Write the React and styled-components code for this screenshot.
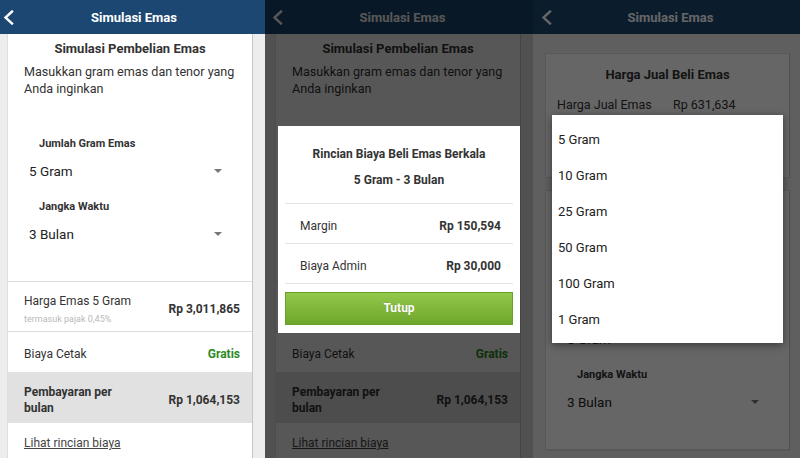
import React from "react";
import styled, { createGlobalStyle } from "styled-components";

const Global = createGlobalStyle`
  html, body { margin: 0; padding: 0; background: #ececec; }
  body { font-family: Roboto, "Noto Sans", Arial, sans-serif; -webkit-font-smoothing: antialiased; }
  #root { width: 800px; height: 458px; overflow: hidden; }
  * { box-sizing: border-box; }
`;

const Screen = styled.div`
  display: flex;
  width: 800px;
  height: 458px;
  overflow: hidden;
`;

const Phone = styled.div`
  position: relative;
  flex: none;
  width: ${(p) => p.$w}px;
  height: 458px;
  overflow: hidden;
  display: flex;
  flex-direction: column;
  background: #ededed;
`;

const Header = styled.div`
  flex: none;
  height: 34px;
  background: #1c4772;
  display: grid;
  grid-template-columns: 40px 1fr 40px;
  align-items: center;
  padding-left: ${(p) => p.$pad}px;
`;

const HeaderTitle = styled.div`
  color: #fff;
  font-size: 13px;
  font-weight: 700;
  text-align: center;
  grid-column: 2;
`;

const BackIcon = () => (
  <svg width="11" height="15" viewBox="0 0 11 15">
    <polyline points="9,1.5 2.5,7.5 9,13.5" fill="none" stroke="#fff" strokeWidth="2.4" strokeLinecap="square" />
  </svg>
);

const Body = styled.div`
  flex: 1;
  display: flex;
  flex-direction: column;
  gap: 12px;
  padding: 0 ${(p) => p.$r}px 0 ${(p) => p.$l}px;
  overflow: hidden;
`;

const Card = styled.div`
  flex: none;
  background: #fff;
  border: 1px solid #dedede;
  border-right-color: #c6c6c6;
  margin-top: ${(p) => p.$mt || 0}px;
  height: ${(p) => (p.$h ? `${p.$h}px` : "auto")};
`;

const Form = styled.div`
  padding: ${(p) => (p.$compact ? 114 : 17)}px 0 33px;
  border-bottom: 1px solid #dcdcdc;
`;

const CardTitle = styled.div`
  font-size: 13px;
  font-weight: 700;
  line-height: 18px;
  color: #333;
  text-align: center;
`;

const Desc = styled.div`
  margin: 5px 8px 0 16px;
  font-size: 12.6px;
  line-height: 17px;
  color: #333;
`;

const Label = styled.div`
  margin: ${(p) => p.$mt}px 0 0 31px;
  font-size: 11px;
  font-weight: 700;
  line-height: 14px;
  color: #333;
`;

const Select = styled.div`
  margin-top: 5px;
  height: 29px;
  display: flex;
  align-items: center;
  justify-content: space-between;
  padding: 0 30px 0 21px;
  font-size: 13.5px;
  color: #222;
`;

const Caret = styled.span`
  width: 0;
  height: 0;
  border-left: 4px solid transparent;
  border-right: 4px solid transparent;
  border-top: 4px solid #777;
`;

const Row = styled.div`
  display: flex;
  align-items: center;
  justify-content: space-between;
  height: ${(p) => p.$h}px;
  padding: ${(p) => p.$pt || 0}px 12px 0 16px;
  background: ${(p) => (p.$shade ? "#e1e1e1" : "#fff")};
  border-bottom: ${(p) => (p.$line ? "1px solid #dcdcdc" : "none")};
  font-size: 12px;
  color: #333;
`;

const LeftCol = styled.div`
  display: flex;
  flex-direction: column;
  max-width: ${(p) => (p.$narrow ? "104px" : "none")};
  font-weight: ${(p) => (p.$bold ? 700 : 400)};
  line-height: 16px;
`;

const Sub = styled.span`
  margin-top: 4px;
  font-size: 9px;
  line-height: 12px;
  color: #b9b9b9;
`;

const Value = styled.span`
  font-weight: 700;
  color: ${(p) => (p.$green ? "#2a8a1f" : "#333")};
`;

const LinkText = styled.span`
  text-decoration: underline;
  color: #444;
  font-size: 12px;
`;

const SimCard = ({ mt, compact }) => (
  <Card $mt={mt}>
    <Form $compact={compact}>
      {!compact && (
        <>
          <CardTitle>Simulasi Pembelian Emas</CardTitle>
          <Desc>Masukkan gram emas dan tenor yang Anda inginkan</Desc>
        </>
      )}
      <Label $mt={compact ? 0 : 40}>Jumlah Gram Emas</Label>
      <Select>
        5 Gram <Caret />
      </Select>
      <Label $mt={15}>Jangka Waktu</Label>
      <Select>
        3 Bulan <Caret />
      </Select>
    </Form>
    {!compact && (
      <>
        <Row $h={50} $pt={5} $line>
          <LeftCol>
            Harga Emas 5 Gram
            <Sub>termasuk pajak 0,45%</Sub>
          </LeftCol>
          <Value>Rp 3,011,865</Value>
        </Row>
        <Row $h={40} $pt={3}>
          <LeftCol>Biaya Cetak</LeftCol>
          <Value $green>Gratis</Value>
        </Row>
        <Row $h={51} $pt={5} $shade>
          <LeftCol $bold $narrow>
            Pembayaran per bulan
          </LeftCol>
          <Value>Rp 1,064,153</Value>
        </Row>
        <Row $h={40} $pt={0}>
          <LinkText>Lihat rincian biaya</LinkText>
        </Row>
      </>
    )}
  </Card>
);

const Overlay = styled.div`
  position: absolute;
  inset: 0;
  background: rgba(0, 0, 0, ${(p) => p.$a});
  display: flex;
  align-items: center;
  justify-content: center;
`;

const Modal = styled.div`
  width: 242px;
  background: #fff;
  padding: 0 7px 8px;
`;

const ModalHead = styled.div`
  padding: 19px 0 14px;
  display: flex;
  flex-direction: column;
  gap: 8px;
  align-items: center;
  font-size: 12px;
  font-weight: 700;
  line-height: 18px;
  color: #333;
  border-bottom: 1px solid #e4e4e4;
`;

const ModalRow = styled.div`
  height: 40px;
  padding: 6px 12px 0 15px;
  display: flex;
  align-items: center;
  justify-content: space-between;
  font-size: 12px;
  color: #333;
  border-bottom: 1px solid #e4e4e4;
`;

const Button = styled.div`
  margin-top: 8px;
  height: 33px;
  display: flex;
  align-items: center;
  justify-content: center;
  background: linear-gradient(#93c84b, #6ea72c);
  border: 1px solid #68a12a;
  color: #fff;
  font-size: 12px;
  font-weight: 700;
  text-shadow: 0 0 1px rgba(0, 0, 0, 0.25);
`;

const PriceTitle = styled.div`
  padding-top: 12px;
  font-size: 13px;
  font-weight: 700;
  line-height: 18px;
  color: #333;
  text-align: center;
`;

const PriceRow = styled.div`
  margin-top: 13px;
  display: grid;
  grid-template-columns: 116px 1fr;
  padding-left: 11px;
  font-size: 12.5px;
  line-height: 16px;
  color: #333;
`;

const Dropdown = styled.div`
  position: absolute;
  top: 115px;
  left: 19px;
  width: 231px;
  background: #fff;
  padding: 6px 0;
  box-shadow: 0 2px 8px rgba(0, 0, 0, 0.45);
`;

const Option = styled.div`
  height: 36px;
  display: flex;
  align-items: center;
  padding-left: 6px;
  font-size: 13px;
  color: #222;
`;

const Top = ({ pad }) => (
  <Header $pad={pad}>
    <BackIcon />
    <HeaderTitle>Simulasi Emas</HeaderTitle>
  </Header>
);

export default function App() {
  const grams = ["5 Gram", "10 Gram", "25 Gram", "50 Gram", "100 Gram", "1 Gram"];
  return (
    <>
      <Global />
      <Screen>
        <Phone $w={265}>
          <Top pad={3} />
          <Body $l={7} $r={12}>
            <SimCard mt={-12} />
          </Body>
        </Phone>

        <Phone $w={268}>
          <Top pad={7} />
          <Body $l={10} $r={12}>
            <SimCard mt={-12} />
          </Body>
          <Overlay $a={0.66}>
            <Modal>
              <ModalHead>
                <span>Rincian Biaya Beli Emas Berkala</span>
                <span>5 Gram - 3 Bulan</span>
              </ModalHead>
              <ModalRow>
                <span>Margin</span>
                <Value>Rp 150,594</Value>
              </ModalRow>
              <ModalRow>
                <span>Biaya Admin</span>
                <Value>Rp 30,000</Value>
              </ModalRow>
              <Button>Tutup</Button>
            </Modal>
          </Overlay>
        </Phone>

        <Phone $w={267}>
          <Top pad={8} />
          <Body $l={12} $r={10}>
            <Card $mt={19} $h={125}>
              <PriceTitle>Harga Jual Beli Emas</PriceTitle>
              <PriceRow>
                <span>Harga Jual Emas</span>
                <span>Rp 631,634</span>
              </PriceRow>
            </Card>
            <SimCard mt={0} compact />
          </Body>
          <Overlay $a={0.6} />
          <Dropdown>
            {grams.map((g) => (
              <Option key={g}>{g}</Option>
            ))}
          </Dropdown>
        </Phone>
      </Screen>
    </>
  );
}
